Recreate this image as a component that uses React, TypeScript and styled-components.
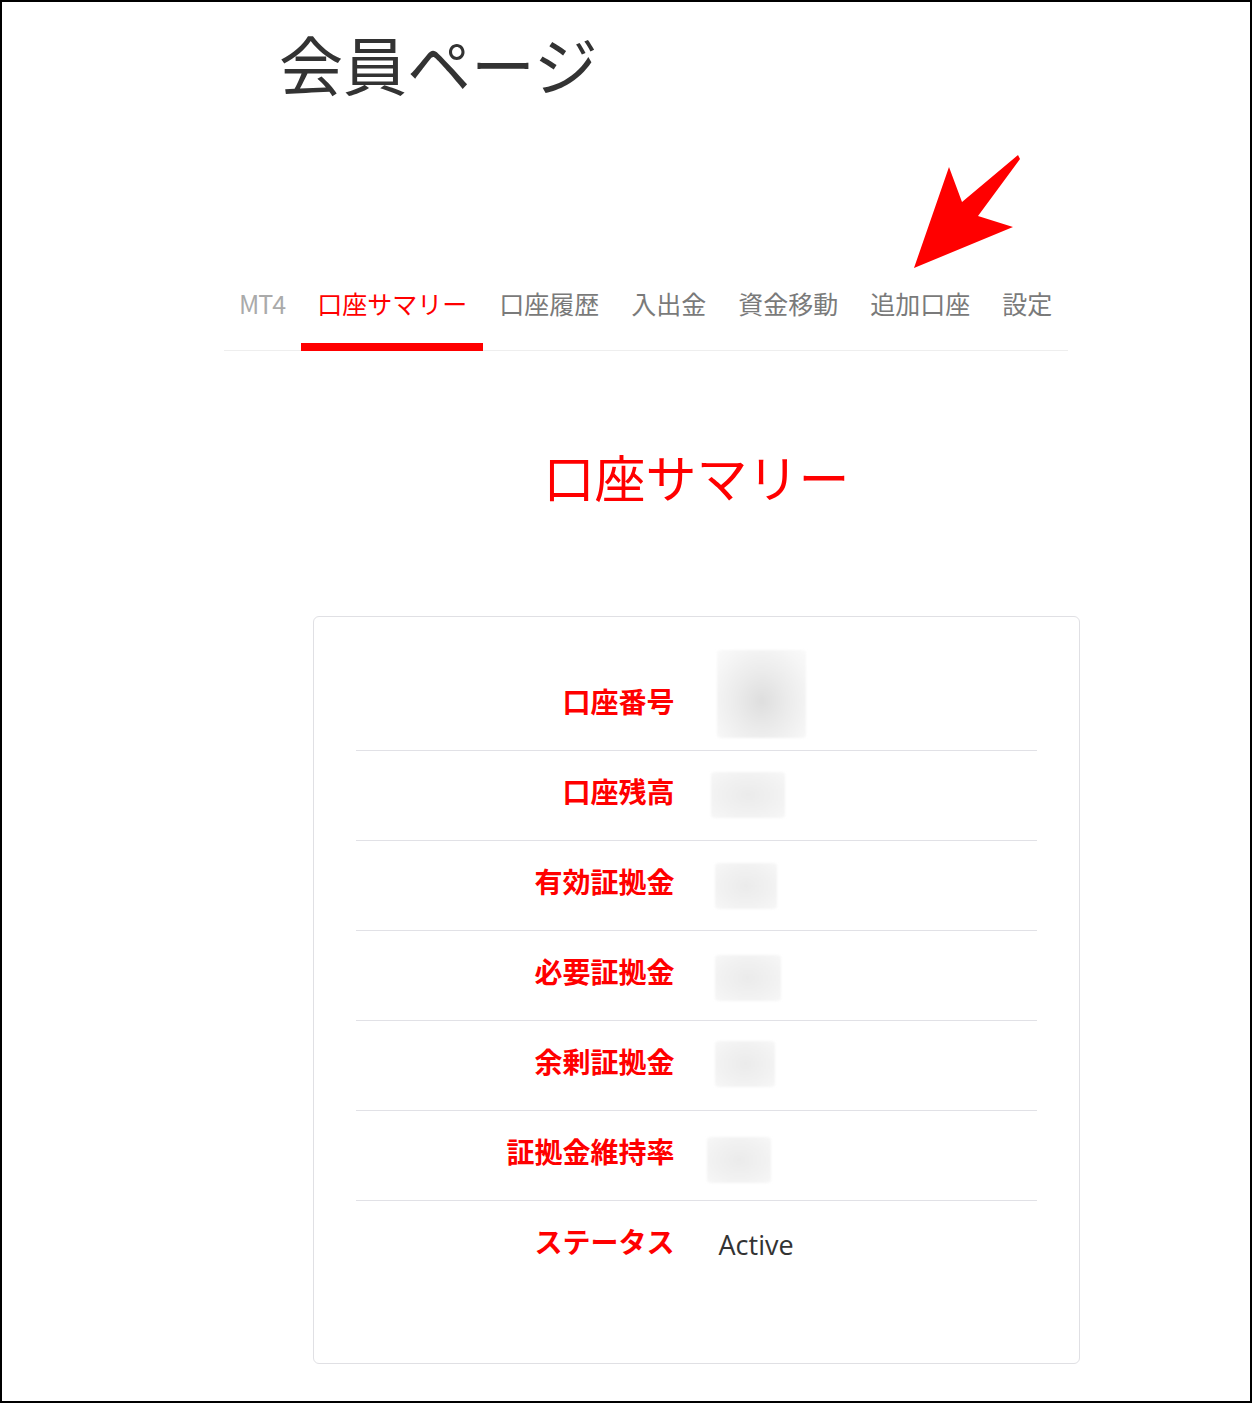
import React from "react";
import styled, { createGlobalStyle } from "styled-components";

const GlobalStyle = createGlobalStyle`
  html, body { margin: 0; padding: 0; background: #fff; }
  body { font-family: "Noto Sans CJK JP", "Noto Sans", sans-serif; }
  * { box-sizing: border-box; }
`;

const Frame = styled.div`
  position: relative;
  width: 1252px;
  height: 1403px;
  border: 2px solid #000;
  background: #fff;
  overflow: hidden;
`;

const Title = styled.h1`
  margin: 28px 0 0 277px;
  font-family: "Noto Sans CJK JP", sans-serif;
  font-size: 64px;
  line-height: 64px;
  font-weight: 400;
  color: #333;
`;

const Nav = styled.nav`
  display: flex;
  margin: 194px 0 0 222px;
  width: 844px;
  border-bottom: 1px solid #eeeeee;
`;

const Tab = styled.div<{ $active?: boolean; $muted?: boolean }>`
  padding: 0 16px 25px ${(p) => (p.$muted ? 15 : 16)}px;
  font-size: 25px;
  line-height: 30px;
  white-space: nowrap;
  letter-spacing: ${(p) => (p.$muted ? "-1px" : "0")};
  font-family: "Noto Sans CJK JP", sans-serif;
  color: ${(p) => (p.$active ? "#ff0000" : p.$muted ? "#aaaaaa" : "#7a7a7a")};
  border-bottom: 8px solid ${(p) => (p.$active ? "#ff0000" : "transparent")};
  margin-bottom: -1px;
`;

const Main = styled.main`
  margin-left: 311px;
  width: 767px;
`;

const Heading = styled.h2`
  margin: 95px 0 0;
  text-align: center;
  font-family: "Noto Sans CJK JP", sans-serif;
  font-size: 51px;
  line-height: 60px;
  font-weight: 400;
  color: #ff0000;
`;

const Card = styled.section`
  margin-top: 110px;
  height: 748px;
  border: 1px solid #e0e0e4;
  border-radius: 6px;
  padding: 44px 42px 72px;
`;

const Row = styled.div<{ $first?: boolean }>`
  display: grid;
  grid-template-columns: 1fr 1fr;
  align-items: center;
  padding: 21px 0 22px;
  border-top: ${(p) => (p.$first ? "none" : "1px solid #e1e1e6")};
`;

const Label = styled.div`
  padding: 0 22px 8px 0;
  text-align: right;
  font-family: "Noto Sans CJK JP", sans-serif;
  font-weight: 700;
  font-size: 28px;
  line-height: 38px;
  color: #ff0000;
  white-space: nowrap;
`;

const Value = styled.div`
  padding-left: 22px;
  display: flex;
  align-items: center;
  min-height: 46px;
`;

const Text = styled.span`
  font-family: "Open Sans", "Noto Sans", sans-serif;
  font-size: 27px;
  line-height: 46px;
  color: #333;
`;

const Blur = styled.div<{ $w: number; $h: number; $dx: number; $top: number; $bottom: number; $dark?: boolean }>`
  width: ${(p) => p.$w}px;
  height: ${(p) => p.$h}px;
  margin: ${(p) => `${p.$top}px 0 ${p.$bottom}px ${p.$dx}px`};
  border-radius: 4px;
  background: ${(p) =>
    p.$dark
      ? "radial-gradient(ellipse at 50% 58%, #dedede 0%, #ebebeb 40%, #f6f6f6 80%, #fafafa 100%)"
      : "radial-gradient(ellipse at 50% 50%, #ebebeb 0%, #f1f1f1 55%, #f7f7f7 100%)"};
  filter: blur(1px);
`;

const Arrow = styled.svg`
  position: absolute;
  left: 898px;
  top: 138px;
  width: 140px;
  height: 140px;
`;

const tabs = ["MT4", "口座サマリー", "口座履歴", "入出金", "資金移動", "追加口座", "設定"];

type RowData = {
  label: string;
  text?: string;
  blur?: { w: number; h: number; dx: number; top: number; bottom: number; dark?: boolean };
};

const rows: RowData[] = [
  { label: "口座番号", blur: { w: 89, h: 88, dx: -2, top: -32, bottom: -10, dark: true } },
  { label: "口座残高", blur: { w: 74, h: 46, dx: -8, top: 0, bottom: 0 } },
  { label: "有効証拠金", blur: { w: 62, h: 46, dx: -4, top: 1, bottom: -1 } },
  { label: "必要証拠金", blur: { w: 66, h: 46, dx: -4, top: 3, bottom: -3 } },
  { label: "余剰証拠金", blur: { w: 60, h: 46, dx: -4, top: -1, bottom: 1 } },
  { label: "証拠金維持率", blur: { w: 64, h: 46, dx: -12, top: 5, bottom: -5 } },
  { label: "ステータス", text: "Active" },
];

export default function App() {
  return (
    <>
      <GlobalStyle />
      <Frame>
        <Title>会員ページ</Title>
        <Nav>
          {tabs.map((t, i) => (
            <Tab key={t} $active={i === 1} $muted={i === 0}>
              {t}
            </Tab>
          ))}
        </Nav>
        <Main>
          <Heading>口座サマリー</Heading>
          <Card>
            {rows.map((r, i) => (
              <Row key={r.label} $first={i === 0}>
                <Label>{r.label}</Label>
                <Value>
                  {r.text ? (
                    <Text>{r.text}</Text>
                  ) : r.blur ? (
                    <Blur
                      $w={r.blur.w}
                      $h={r.blur.h}
                      $dx={r.blur.dx}
                      $top={r.blur.top}
                      $bottom={r.blur.bottom}
                      $dark={r.blur.dark}
                    />
                  ) : null}
                </Value>
              </Row>
            ))}
          </Card>
        </Main>
        <Arrow viewBox="0 0 140 140">
          <polygon
            points="14,128 49,27 62,62 118,15 120,19 78,76 113,87"
            fill="#ff0000"
          />
        </Arrow>
      </Frame>
    </>
  );
}
